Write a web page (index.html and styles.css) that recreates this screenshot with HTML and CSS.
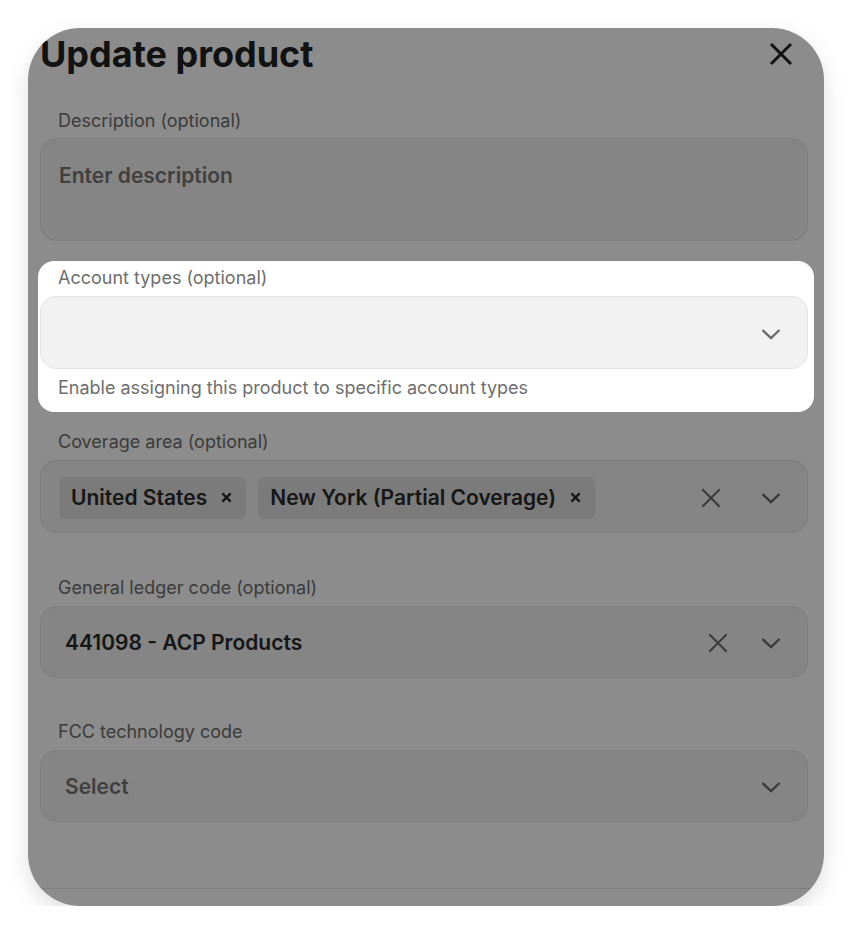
FILE: index.html
```html
<!DOCTYPE html>
<html lang="en">
<head>
<meta charset="utf-8">
<title>Update product</title>
<link rel="stylesheet" href="styles.css">
</head>
<body>
<div class="page">
  <div class="card">
    <div class="header">
      <h1 class="title">Update product</h1>
      <button class="close" type="button" aria-label="Close">
        <svg viewBox="0 0 24 24" width="24" height="24"><path d="M2 2 L22 22 M22 2 L2 22" fill="none" stroke="currentColor" stroke-width="3"/></svg>
      </button>
    </div>

    <div class="field f-desc">
      <div class="label">Description (optional)</div>
      <div class="textarea"><span class="placeholder">Enter description</span></div>
    </div>

    <div class="field f-account spot">
      <div class="label">Account types (optional)</div>
      <div class="select">
        <div class="value"></div>
        <span class="chev"><svg viewBox="0 0 24 24" width="24" height="24"><path d="M3.5 8 L12 16 L20.5 8" fill="none" stroke="currentColor" stroke-width="2.4"/></svg></span>
      </div>
      <div class="helper">Enable assigning this product to specific account types</div>
    </div>

    <div class="field f-coverage">
      <div class="label">Coverage area (optional)</div>
      <div class="select chips-select">
        <div class="value chips">
          <span class="chip">United States<svg class="chip-x" viewBox="0 0 12 12" width="12" height="12"><path d="M1.5 1.5 L10.5 10.5 M10.5 1.5 L1.5 10.5" fill="none" stroke="currentColor" stroke-width="2.5"/></svg></span>
          <span class="chip">New York (Partial Coverage)<svg class="chip-x" viewBox="0 0 12 12" width="12" height="12"><path d="M1.5 1.5 L10.5 10.5 M10.5 1.5 L1.5 10.5" fill="none" stroke="currentColor" stroke-width="2.5"/></svg></span>
        </div>
        <span class="clear clear-wide"><svg viewBox="0 0 24 24" width="24" height="24"><path d="M2.5 2.5 L21.5 21.5 M21.5 2.5 L2.5 21.5" fill="none" stroke="currentColor" stroke-width="2.2"/></svg></span>
        <span class="chev"><svg viewBox="0 0 24 24" width="24" height="24"><path d="M3.5 8 L12 16 L20.5 8" fill="none" stroke="currentColor" stroke-width="2.4"/></svg></span>
      </div>
    </div>

    <div class="field f-ledger">
      <div class="label">General ledger code (optional)</div>
      <div class="select text-select">
        <div class="value"><span class="val">441098 - ACP Products</span></div>
        <span class="clear"><svg viewBox="0 0 24 24" width="24" height="24"><path d="M2.5 2.5 L21.5 21.5 M21.5 2.5 L2.5 21.5" fill="none" stroke="currentColor" stroke-width="2.2"/></svg></span>
        <span class="chev"><svg viewBox="0 0 24 24" width="24" height="24"><path d="M3.5 8 L12 16 L20.5 8" fill="none" stroke="currentColor" stroke-width="2.4"/></svg></span>
      </div>
    </div>

    <div class="field f-fcc">
      <div class="label">FCC technology code</div>
      <div class="select text-select">
        <div class="value"><span class="placeholder">Select</span></div>
        <span class="chev"><svg viewBox="0 0 24 24" width="24" height="24"><path d="M3.5 8 L12 16 L20.5 8" fill="none" stroke="currentColor" stroke-width="2.4"/></svg></span>
      </div>
    </div>

    <div class="footer"></div>
  </div>
</div>
</body>
</html>
```

FILE: styles.css
```css
* { box-sizing: border-box; }

html, body {
  margin: 0;
  padding: 0;
  background: #ffffff;
}

body {
  font-family: Inter, "Noto Sans", "Liberation Sans", sans-serif;
  color: #222222;
}

.page {
  padding: 28px 28px 0 28px;
}

.card {
  width: 796px;
  height: 878px;
  background: #ffffff;
  border-radius: 52px;
  overflow: hidden;
  box-shadow: 0 8px 22px rgba(0, 0, 0, 0.13);
  padding: 6px 16px 0 12px;
  display: flex;
  flex-direction: column;
}

.header {
  display: flex;
  align-items: center;
  justify-content: space-between;
  height: 40px;
  margin-bottom: 34px;
}

.title {
  margin: 0;
  font-size: 36px;
  line-height: 40px;
  font-weight: 700;
  color: #222222;
}

.close {
  border: 0;
  background: transparent;
  padding: 0;
  margin-right: 15px;
  width: 24px;
  height: 24px;
  color: #222222;
  display: flex;
}

.field {
  display: flex;
  flex-direction: column;
}

.label {
  font-size: 18px;
  line-height: 24px;
  color: #6e6e6e;
  padding: 1px 0 0 18px;
  margin-bottom: 6px;
}

.f-desc { margin-bottom: 24px; }
.f-desc .label { margin-bottom: 5px; }
.f-account { margin-bottom: 29px; }
.f-coverage { margin-bottom: 42px; }
.f-ledger { margin-bottom: 41px; }

.textarea,
.select {
  background: #f2f2f2;
  border: 1px solid #e3e3e3;
  border-radius: 16px;
}

.textarea {
  height: 103px;
  padding: 25px 18px 0 18px;
}

.placeholder {
  font-size: 21px;
  line-height: 24px;
  font-weight: 600;
  color: #767676;
}

.select {
  height: 73px;
  display: flex;
  align-items: center;
  padding: 2px 24px 0 0;
}

.text-select { height: 72px; }

.value {
  flex: 1;
  padding-left: 24px;
}

.val {
  font-size: 21px;
  line-height: 24px;
  font-weight: 600;
  color: #2a2a2a;
}

.chips {
  display: flex;
  gap: 12px;
  padding-left: 18px;
}

.chip {
  display: inline-flex;
  align-items: center;
  gap: 14px;
  height: 42px;
  padding: 0 14px 0 12px;
  background: #e0e0e0;
  border-radius: 6px;
  font-size: 21px;
  font-weight: 600;
  color: #2a2a2a;
}

.chip-x {
  width: 11px;
  height: 11px;
  color: #2a2a2a;
}

.clear,
.chev {
  width: 24px;
  height: 24px;
  display: flex;
  color: #6b6b6b;
}

.clear { margin-right: 30px; width: 22px; height: 22px; }
.clear svg { width: 22px; height: 22px; }
.clear-wide { margin-right: 37px; }

.helper {
  margin-top: 7px;
  font-size: 18px;
  line-height: 24px;
  color: #6e6e6e;
  padding-left: 18px;
}

.spot {
  position: relative;
}

.spot::before {
  content: "";
  position: absolute;
  top: -4px;
  right: -6px;
  bottom: -12px;
  left: -2px;
  border-radius: 16px;
  box-shadow: 0 0 0 2000px rgba(0, 0, 0, 0.45);
  pointer-events: none;
}

.footer {
  margin-top: 66px;
  margin-left: -12px;
  margin-right: -16px;
  border-top: 1px solid #e5e5e5;
  flex: 1;
}
```
